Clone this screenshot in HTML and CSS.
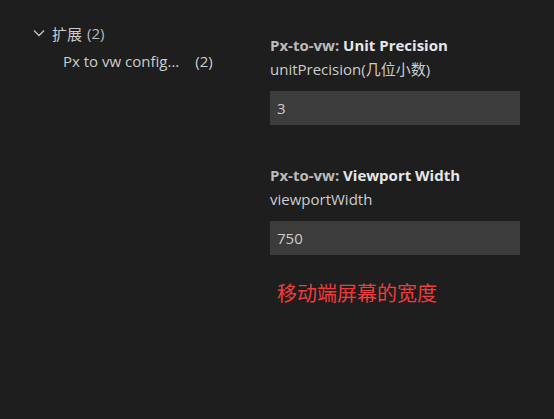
FILE: index.html
```html
<!DOCTYPE html>
<html>
<head>
<meta charset="utf-8">
<link rel="stylesheet" href="styles.css">
</head>
<body>
<div class="page">
  <div class="tree">
    <div class="row group">
      <svg class="chev" width="12" height="8" viewBox="0 0 12 8"><path d="M1 1.5 L6 6.5 L11 1.5" fill="none" stroke="#c5c5c5" stroke-width="1.3"/></svg>
      <span class="label">扩展</span><span class="count">(2)</span>
    </div>
    <div class="row item">
      <span class="label">Px to vw config...</span><span class="count">(2)</span>
    </div>
  </div>
  <div class="settings">
    <div class="setting">
      <div class="title"><span class="cat">Px-to-vw: </span><span class="name">Unit Precision</span></div>
      <div class="desc">unitPrecision(几位小数)</div>
      <div class="input">3</div>
    </div>
    <div class="setting">
      <div class="title"><span class="cat">Px-to-vw: </span><span class="name">Viewport Width</span></div>
      <div class="desc">viewportWidth</div>
      <div class="input">750</div>
      <div class="note">移动端屏幕的宽度</div>
    </div>
  </div>
</div>
</body>
</html>
```
FILE: styles.css
```css
html, body {
  margin: 0;
  padding: 0;
  background: #1e1e1e;
  height: 100%;
}
body {
  font-family: "Open Sans", "Noto Sans", "Noto Sans CJK SC", sans-serif;
  font-size: 15px;
  color: #cccccc;
}
.page {
  display: flex;
}
.tree {
  width: 270px;
  padding-top: 22px;
}
.row {
  display: flex;
  align-items: center;
  height: 22px;
  white-space: nowrap;
}
.group {
  padding-left: 33px;
  color: #cccccc;
}
.chev {
  margin-right: 7px;
}
.group .count {
  margin-left: 5px;
  color: #bbbbbb;
}
.item {
  padding-left: 63px;
  margin-top: 6px;
}
.item .count {
  margin-left: 16px;
}
.settings {
  width: 250px;
  padding-top: 35px;
}
.setting {
  margin-bottom: 40px;
}
.title {
  line-height: 20px;
  font-weight: 700;
}
.cat {
  color: #bbbbbb;
}
.name {
  color: #e7e7e7;
}
.desc {
  line-height: 20px;
  margin-top: 4px;
  color: #cccccc;
}
.input {
  margin-top: 12px;
  height: 34px;
  background: #3c3c3c;
  color: #cccccc;
  display: flex;
  align-items: center;
  padding-left: 7px;
}
.note {
  margin-top: 25px;
  padding-left: 7px;
  font-size: 20px;
  line-height: 26px;
  color: #f03c3c;
  font-family: "Noto Sans CJK SC", sans-serif;
}
```
